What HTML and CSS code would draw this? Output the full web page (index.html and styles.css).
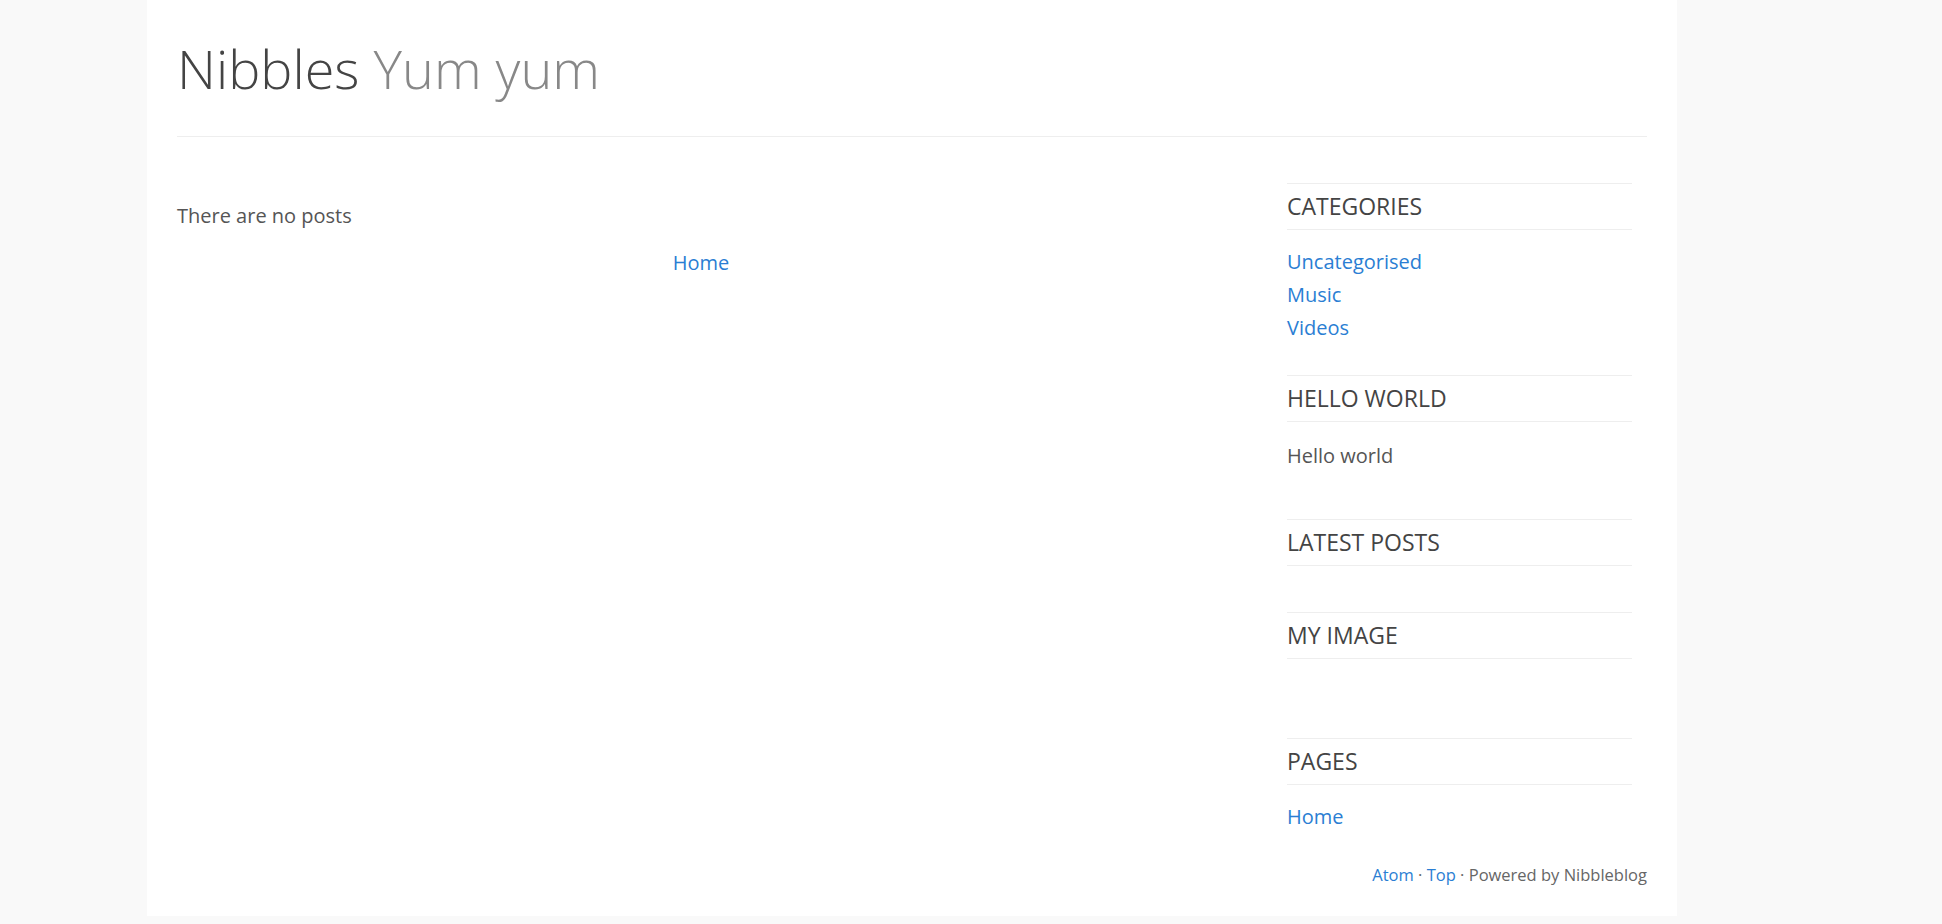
FILE: index.html
```html
<!DOCTYPE html>
<html>
<head>
<meta charset="utf-8">
<link rel="stylesheet" href="styles.css">
</head>
<body>
<div class="page">
  <header class="site-header">
    <h1 class="site-title">Nibbles <span class="slogan">Yum yum</span></h1>
  </header>
  <div class="content">
    <main class="main">
      <p class="no-posts">There are no posts</p>
      <div class="pager"><a href="#">Home</a></div>
    </main>
    <aside class="sidebar">
      <section class="widget">
        <h3 class="widget-title">CATEGORIES</h3>
        <ul class="links">
          <li><a href="#">Uncategorised</a></li>
          <li><a href="#">Music</a></li>
          <li><a href="#">Videos</a></li>
        </ul>
      </section>
      <section class="widget">
        <h3 class="widget-title">HELLO WORLD</h3>
        <p class="widget-text">Hello world</p>
      </section>
      <section class="widget">
        <h3 class="widget-title">LATEST POSTS</h3>
        <ul class="links"></ul>
      </section>
      <section class="widget">
        <h3 class="widget-title">MY IMAGE</h3>
        <div class="image-slot"></div>
      </section>
      <section class="widget">
        <h3 class="widget-title">PAGES</h3>
        <ul class="links">
          <li><a href="#">Home</a></li>
        </ul>
      </section>
    </aside>
  </div>
  <footer class="site-footer">
    <a href="#">Atom</a> · <a href="#">Top</a> · Powered by Nibbleblog
  </footer>
</div>
</body>
</html>
```

FILE: styles.css
```css
html, body {
  margin: 0;
  padding: 0;
}
body {
  background: #f9f9f9;
  font-family: "Open Sans", "Liberation Sans", sans-serif;
  color: #555;
}
a {
  color: #2a7ed3;
  text-decoration: none;
}
.page {
  width: 1530px;
  margin-left: 147px;
  background: #fff;
  box-sizing: border-box;
  padding: 0 30px 28px;
  min-height: 916px;
}
.site-header {
  padding-top: 36px;
  padding-bottom: 35px;
  border-bottom: 1px solid #eeeeee;
}
.site-title {
  margin: 0;
  font-size: 54px;
  font-weight: 300;
  line-height: 65px;
  color: #444;
}
.slogan {
  color: #888;
}
.content {
  display: flex;
  justify-content: space-between;
}
.main {
  width: 1048px;
  padding-top: 62px;
}
.no-posts {
  margin: 0;
  font-size: 20px;
  line-height: 33px;
}
.pager {
  text-align: center;
  font-size: 20px;
  line-height: 33px;
  margin-top: 14px;
}
.sidebar {
  width: 345px;
  margin-right: 15px;
  padding-top: 46px;
}
.widget {
  padding-bottom: 31px;
}
.widget-title {
  margin: 0 0 15px;
  border-top: 1px solid #eeeeee;
  border-bottom: 1px solid #eeeeee;
  padding: 7px 0 7px;
  font-size: 23px;
  line-height: 31px;
  font-weight: 400;
  color: #444;
}
.links {
  list-style: none;
  margin: 0;
  padding: 0;
  font-size: 20px;
  line-height: 33px;
}
.widget-text {
  margin: 0 0 16px;
  padding-top: 2px;
  font-size: 20px;
  line-height: 33px;
}
.image-slot {
  height: 33px;
}
.site-footer {
  text-align: right;
  font-size: 16.5px;
  line-height: 22px;
  color: #666;
}
```
